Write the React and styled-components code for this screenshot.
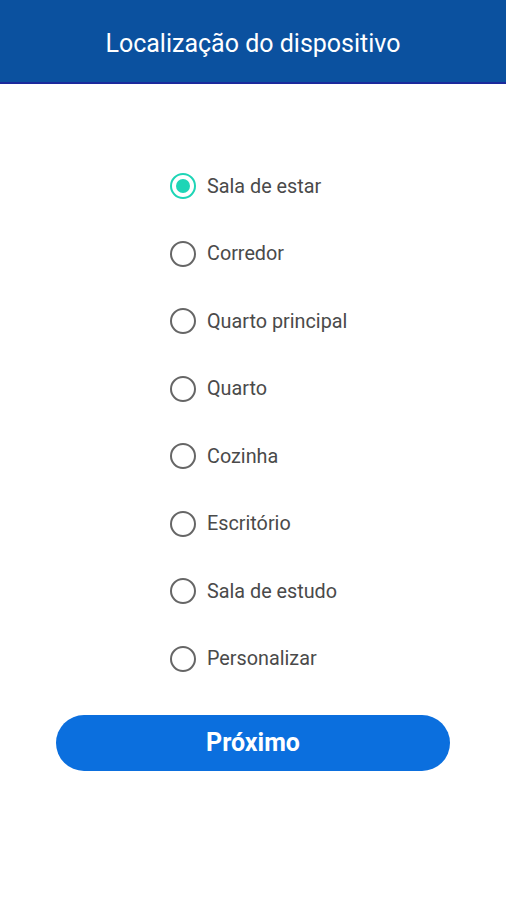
import React, { useState } from "react"
import styled, { createGlobalStyle } from "styled-components"

const GlobalStyle = createGlobalStyle`
  html, body {
    margin: 0;
    padding: 0;
    background: #ffffff;
    font-family: Roboto, "Noto Sans", "Liberation Sans", sans-serif;
  }
`

const Page = styled.div`
  width: 506px;
  min-height: 900px;
  background: #ffffff;
`

const Header = styled.header`
  height: 82px;
  background: #0b519f;
  border-bottom: 2px solid #1b2a9c;
  display: flex;
  align-items: center;
  justify-content: center;
  box-sizing: content-box;

  h1 {
    margin: 0;
    color: #ffffff;
    font-size: 25px;
    font-weight: 400;
    padding-top: 5px;
  }
`

const List = styled.div`
  display: flex;
  flex-direction: column;
  padding: 89px 0 0 170px;
  gap: 41.5px;
`

const Option = styled.label`
  display: flex;
  align-items: center;
  gap: 11px;
  height: 26px;
  cursor: pointer;
  color: #4a4a4a;
  font-size: 19.8px;
`

const Circle = styled.span`
  width: 26px;
  height: 26px;
  box-sizing: border-box;
  border-radius: 50%;
  border: 2px solid ${(p) => (p.$checked ? "#1ed5b6" : "#666666")};
  display: flex;
  align-items: center;
  justify-content: center;
  flex-shrink: 0;

  &::after {
    content: "";
    width: 14px;
    height: 14px;
    border-radius: 50%;
    background: #1ed5b6;
    display: ${(p) => (p.$checked ? "block" : "none")};
  }
`

const Footer = styled.div`
  display: flex;
  justify-content: center;
  padding-top: 43px;
`

const NextButton = styled.button`
  width: 394px;
  height: 56px;
  border: none;
  border-radius: 28px;
  background: #0b6fde;
  color: #ffffff;
  font-family: inherit;
  font-size: 25px;
  font-weight: 700;
  cursor: pointer;
`

const rooms = [
  "Sala de estar",
  "Corredor",
  "Quarto principal",
  "Quarto",
  "Cozinha",
  "Escritório",
  "Sala de estudo",
  "Personalizar",
]

const App = () => {
  const [selected, setSelected] = useState(0)

  return (
    <Page>
      <GlobalStyle />
      <Header>
        <h1>Localização do dispositivo</h1>
      </Header>
      <List>
        {rooms.map((room, i) => (
          <Option key={room} onClick={() => setSelected(i)}>
            <Circle $checked={selected === i} />
            {room}
          </Option>
        ))}
      </List>
      <Footer>
        <NextButton>Próximo</NextButton>
      </Footer>
    </Page>
  )
}

export default App
